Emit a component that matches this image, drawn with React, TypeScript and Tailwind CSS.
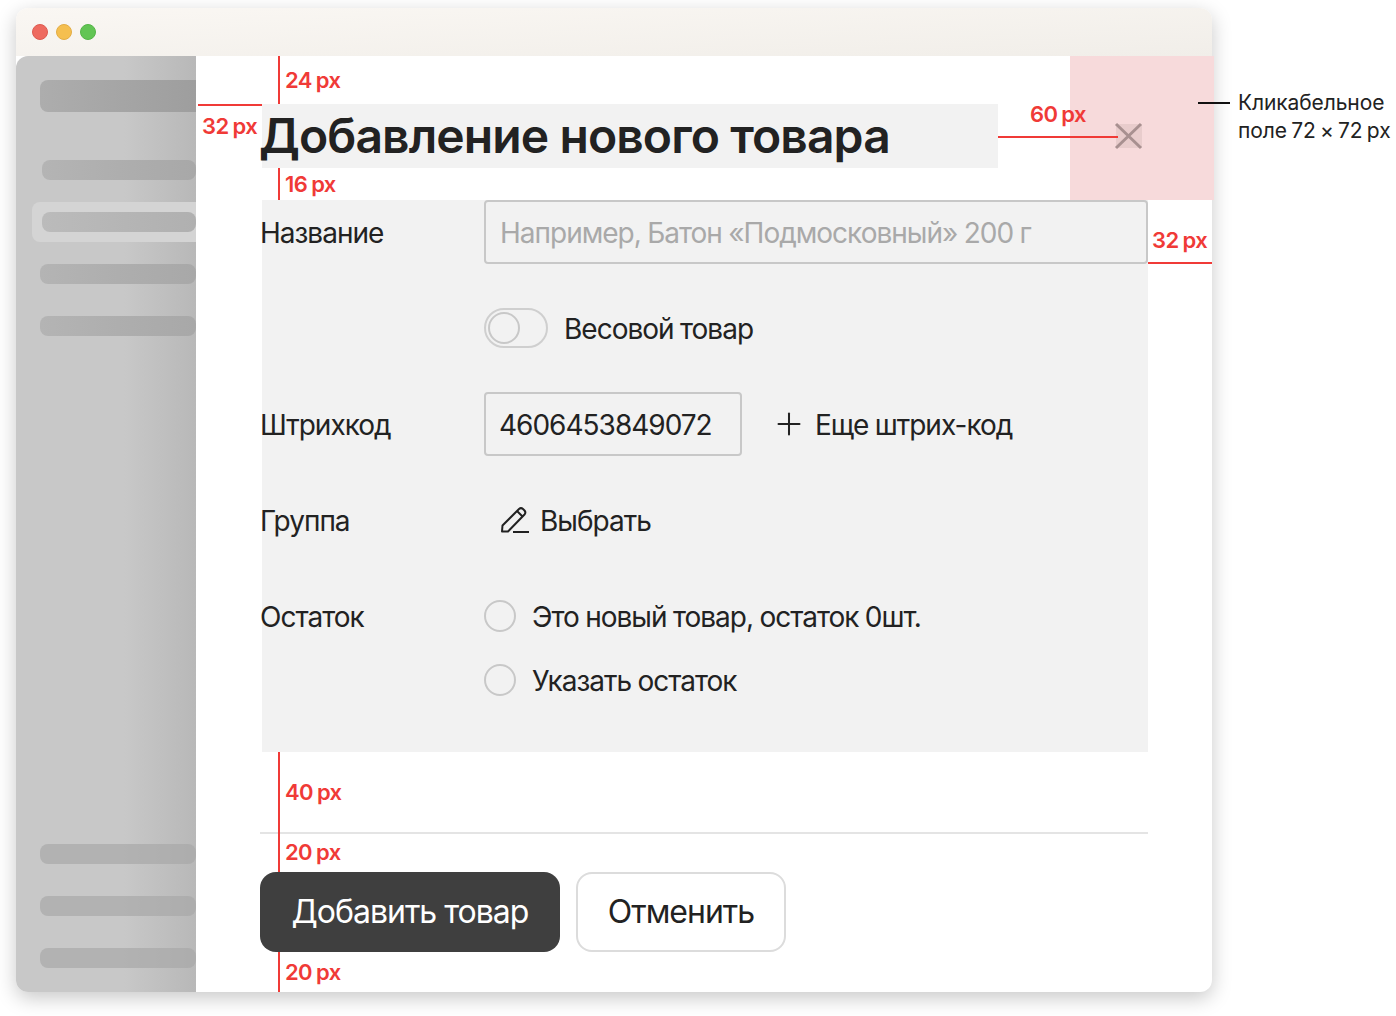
import { Plus } from "lucide-react";

// ── Redline labels ───────────────────────────────────────────────────────

function Size({ value, className }: { value: string; className: string }) {
  return (
    <span className={`absolute text-[22px] leading-[26px] font-semibold text-[#f03a37] tracking-[-0.6px] [word-spacing:-1px] whitespace-nowrap ${className}`}>
      {value} <span>px</span>
    </span>
  );
}

function Row({ label, children }: { label: string; children: React.ReactNode }) {
  return (
    <div className="flex items-center min-h-16">
      <div className="w-[222px] shrink-0 -ml-[2px] mr-[2px] pt-[2px]">{label}</div>
      {children}
    </div>
  );
}

function Radio({ label }: { label: string }) {
  return (
    <div className="flex items-center gap-4 h-16">
      <span className="w-8 h-8 rounded-full border-2 border-[#c8c8c8]" />
      <span className="pt-[2px]">{label}</span>
    </div>
  );
}

const barCls = "h-5 rounded-lg bg-[#a8a8a8]/70";

export default function App() {
  return (
    <div className="relative w-[1396px] h-[1016px] overflow-hidden bg-white pt-2 pl-4 font-['Inter',sans-serif] text-[28px] leading-[36px] tracking-[-1px] [word-spacing:-0.5px] text-[#222222]">
      {/* Window */}
      <div className="flex flex-col w-[1196px] h-[984px] rounded-xl bg-white shadow-[0_6px_20px_rgba(0,0,0,0.22)]">
        <div className="flex items-center gap-2 h-12 shrink-0 pl-4 pt-0 rounded-t-xl bg-gradient-to-br from-[#faf7f3] to-[#f1eee9]">
          <span className="w-4 h-4 rounded-full bg-[#ee6a5f] border border-[#dd5a50]" />
          <span className="w-4 h-4 rounded-full bg-[#f5bf4f] border border-[#e3ad45]" />
          <span className="w-4 h-4 rounded-full bg-[#62c554] border border-[#55b548]" />
        </div>

        <div className="flex flex-1 min-h-0">
          {/* Sidebar, dimmed under the modal */}
          <aside className="flex flex-col w-[180px] shrink-0 pt-6 pb-6 rounded-bl-xl rounded-tl-xl bg-gradient-to-r from-[#c8c8c8] via-[#c8c8c8] via-60% to-[#b8b8b8]">
            <div className="h-8 ml-6 rounded-l-lg bg-gradient-to-r from-[#adadad] to-[#9e9e9e]" />
            <div className="h-5 ml-[26px] mt-12 rounded-lg bg-gradient-to-r from-[#b4b4b4] to-[#a8a8a8]" />
            <div className="flex items-center h-10 ml-4 mt-[22px] pl-[10px] rounded-l-lg bg-[#d4d4d4]">
              <div className="w-full h-5 rounded-lg bg-gradient-to-r from-[#bbbbbb] to-[#b0b0b0]" />
            </div>
            <div className="h-5 ml-6 mt-[22px] rounded-lg bg-gradient-to-r from-[#b4b4b4] to-[#a8a8a8]" />
            <div className="h-5 ml-6 mt-8 rounded-lg bg-gradient-to-r from-[#b4b4b4] to-[#a8a8a8]" />
            <div className="mt-auto flex flex-col gap-8 ml-6">
              <div className={barCls} />
              <div className={barCls} />
              <div className={barCls} />
            </div>
          </aside>

          {/* Modal */}
          <main className="flex-1 pl-[66px] pr-16 pt-12">
            <div className="h-16 w-[736px] bg-[#f2f2f2] flex items-center">
              <h1 className="-ml-[3px] text-[48px] leading-[64px] font-semibold tracking-[-0.9px] [word-spacing:0px] whitespace-nowrap">
                Добавление нового товара
              </h1>
            </div>

            <div className="mt-8 w-[886px] h-[552px] bg-[#f2f2f2] flex flex-col gap-8">
              <Row label="Название">
                <div className="flex items-center flex-1 h-16 px-[14px] pt-[2px] rounded border-2 border-[#c8c8c8] text-[#a9a9a9]">
                  Например, Батон «Подмосковный» 200 г
                </div>
              </Row>
              <Row label="">
                <span className="flex items-center w-16 h-10 rounded-full border-2 border-[#cfcfcf] pl-[2px]">
                  <span className="w-8 h-8 rounded-full border-2 border-[#c8c8c8]" />
                </span>
                <span className="ml-4 pt-[2px]">Весовой товар</span>
              </Row>
              <Row label="Штрихкод">
                <div className="flex items-center w-[258px] h-16 px-[13px] pt-[2px] rounded border-2 border-[#c8c8c8]">4606453849072</div>
                <Plus className="ml-[29px] w-9 h-9" strokeWidth={1.35} />
                <span className="ml-2 pt-[2px]">Еще штрих-код</span>
              </Row>
              <Row label="Группа">
                <svg className="ml-4" width="30" height="28" viewBox="0 0 30 28" fill="none" stroke="#222222" strokeWidth="2" strokeLinejoin="round">
                  <path d="M2 25.5 L2.5 19.5 L19 3 Q21 1.2 23 3 L24.5 4.5 Q26.2 6.5 24.5 8.5 L8 25.5 Z" />
                  <path d="M17 5 L22.5 10.5" />
                  <path d="M13 26 H29" />
                </svg>
                <span className="ml-[10px] pt-[2px]">Выбрать</span>
              </Row>
              <div className="flex">
                <div className="w-[222px] shrink-0 -ml-[2px] mr-[2px] h-16 pt-[2px] flex items-center">Остаток</div>
                <div>
                  <Radio label="Это новый товар, остаток 0шт." />
                  <Radio label="Указать остаток" />
                </div>
              </div>
            </div>

            <div className="-ml-[2px] mt-20 w-[888px] h-[2px] bg-[#e4e4e4]" />

            <div className="-ml-[2px] mt-[38px] flex gap-4 text-[32px] tracking-[-1px]">
              <button className="w-[300px] h-20 rounded-2xl bg-[#3f3f3f] text-white">Добавить товар</button>
              <button className="w-[210px] h-20 rounded-2xl border-2 border-[#dcdcdc] bg-white">Отменить</button>
            </div>
          </main>
        </div>
      </div>

      {/* Redlines */}
      <div className="absolute left-[1070px] top-[56px] w-[144px] h-[144px] bg-[#f7dadb]" />
      <div className="absolute left-[1116px] top-[124px] w-[26px] h-[24px] bg-[#e8cccc]" />
      <svg className="absolute left-[1114px] top-[121px]" width="30" height="30" viewBox="0 0 30 30" stroke="#a89090" strokeWidth="3">
        <path d="M2 3 L27 27 M27 3 L2 27" />
      </svg>

      <div className="absolute left-[278px] top-[56px] w-[2px] h-12 bg-[#f03a37]" />
      <div className="absolute left-[278px] top-[168px] w-[2px] h-8 bg-[#f03a37]" />
      <div className="absolute left-[278px] top-[752px] w-[2px] h-[120px] bg-[#f03a37]" />
      <div className="absolute left-[278px] top-[952px] w-[2px] h-10 bg-[#f03a37]" />
      <div className="absolute left-[198px] top-[104px] w-16 h-[2px] bg-[#f03a37]" />
      <div className="absolute left-[998px] top-[136px] w-[120px] h-[2px] bg-[#f03a37]" />
      <div className="absolute left-[1148px] top-[262px] w-16 h-[2px] bg-[#f03a37]" />

      <Size value="24" className="left-[285px] top-[67px]" />
      <Size value="32" className="left-[202px] top-[113px]" />
      <Size value="16" className="left-[285px] top-[171px]" />
      <Size value="60" className="left-[1030px] top-[101px]" />
      <Size value="32" className="left-[1152px] top-[227px]" />
      <Size value="40" className="left-[285px] top-[779px]" />
      <Size value="20" className="left-[285px] top-[839px]" />
      <Size value="20" className="left-[285px] top-[959px]" />

      <div className="absolute left-[1198px] top-[102px] w-8 h-[2px] bg-[#111111]" />
      <div className="absolute left-[1238px] top-[89px] text-[21px] leading-[28px] tracking-[-0.1px] [word-spacing:-1.5px] whitespace-nowrap">
        Кликабельное
        <br />
        поле 72 × 72 px
      </div>
    </div>
  );
}
